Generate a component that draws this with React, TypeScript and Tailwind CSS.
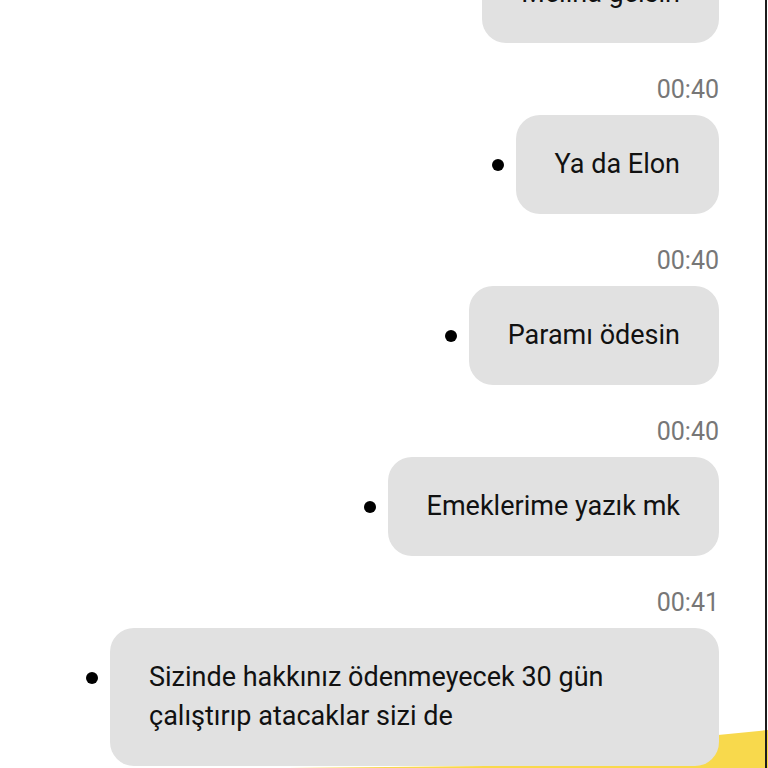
import React from "react";

type Msg = { time?: string; text: string; wide?: boolean };

const messages: Msg[] = [
  { text: "Melina gelsin" },
  { time: "00:40", text: "Ya da Elon" },
  { time: "00:40", text: "Paramı ödesin" },
  { time: "00:40", text: "Emeklerime yazık mk" },
  { time: "00:41", text: "Sizinde hakkınız ödenmeyecek 30 gün çalıştırıp atacaklar sizi de", wide: true },
];

function Bubble({ msg }: { msg: Msg }) {
  return (
    <div className="flex items-start justify-end gap-[12px]">
      <span className="mt-[44px] h-[12px] w-[12px] shrink-0 rounded-full bg-black" />
      <div
        className={
          msg.wide
            ? "max-w-[609px] rounded-[24px] bg-[#e1e1e1] px-[39px] py-[30px] text-[27px] leading-[39px] text-[#111]"
            : "rounded-[24px] bg-[#e1e1e1] px-[39px] py-[30px] text-[27px] leading-[39px] text-[#111]"
        }
      >
        {msg.text}
      </div>
    </div>
  );
}

export default function App() {
  return (
    <div
      className="relative h-[768px] w-[768px] overflow-hidden bg-white"
      style={{ fontFamily: "Roboto, 'Noto Sans', sans-serif" }}
    >
      <svg className="absolute bottom-0 right-0" width="480" height="44" viewBox="0 0 480 44">
        <path d="M0 44 L300 41 Q400 14 430 11 L480 6 L480 44 Z" fill="#f8d94c" />
      </svg>
      <div className="relative flex flex-col pr-[49px]" style={{ marginTop: -56 }}>
        {messages.map((m, i) => (
          <div key={i}>
            {m.time && (
              <div className="mb-[10px] mt-[32px] text-right text-[25px] leading-[30px] text-[#777]">
                {m.time}
              </div>
            )}
            <Bubble msg={m} />
          </div>
        ))}
      </div>
      <div className="absolute bottom-0 right-[1px] top-0 w-[2px] bg-[#1c1c1c]" />
    </div>
  );
}
